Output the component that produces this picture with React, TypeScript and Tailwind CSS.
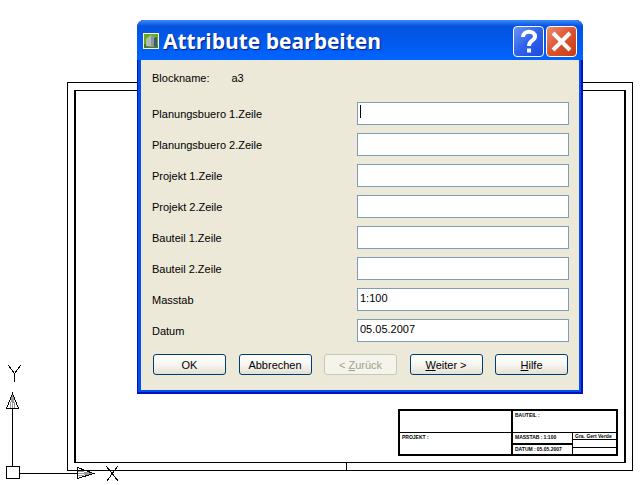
import React from "react";

const fields = [
  { label: "Planungsbuero 1.Zeile", value: "" },
  { label: "Planungsbuero 2.Zeile", value: "" },
  { label: "Projekt 1.Zeile", value: "" },
  { label: "Projekt 2.Zeile", value: "" },
  { label: "Bauteil 1.Zeile", value: "" },
  { label: "Bauteil 2.Zeile", value: "" },
  { label: "Masstab", value: "1:100" },
  { label: "Datum", value: "05.05.2007" },
];

function TitleBlock() {
  return (
    <div className="grid h-[47px] w-[220px] grid-cols-[113px_1fr] border-2 border-black font-['Liberation_Sans_Narrow','Liberation_Sans',sans-serif] text-[5px] leading-[6px] font-bold whitespace-nowrap text-black">
      <div className="grid grid-rows-[22px_1fr] border-r-2 border-black">
        <div className="border-b border-black" />
        <div className="px-[2px] py-px">PROJEKT :</div>
      </div>
      <div className="grid grid-rows-[22px_1fr]">
        <div className="border-b border-black px-[2px] py-px">BAUTEIL :</div>
        <div className="grid grid-cols-[60px_1fr]">
          <div className="grid grid-rows-[12px_1fr] border-r border-black">
            <div className="flex gap-px border-b-2 border-black px-[2px] py-px">
              <span>MASSTAB :</span>
              <span>1:100</span>
            </div>
            <div className="flex gap-px px-[2px] py-px">
              <span>DATUM :</span>
              <span className="font-['Liberation_Sans',sans-serif]">05.05.2007</span>
            </div>
          </div>
          <div className="grid grid-rows-[7px_8px_1fr]">
            <div className="border-b border-black px-[2px] font-['Liberation_Sans',sans-serif]">Gra. Gert Verde</div>
            <div className="border-b border-black" />
            <div />
          </div>
        </div>
      </div>
    </div>
  );
}

function AxesIcon() {
  return (
    <svg className="absolute bottom-0 left-0 h-[125px] w-[125px]" viewBox="0 360 125 125" fill="none" stroke="#000" shapeRendering="crispEdges" aria-hidden="true">
      <rect x="6.5" y="466.5" width="13" height="12" />
      <path d="M12.500 466V408M20 473.500H77" />
      <path d="M12.500 394L10 408M12.500 394L15 408M12.500 394V408M78 471L93 473.500M78 476L93 473.500M78 473.500H93" stroke="#999" />
      <path d="M12.500 393.500L6.500 408.500H18.500ZM77.500 467.500V478.500L93.500 473.500Z" />
      <path d="M8.500 365.500L14.500 373.500L20.500 365.500M14.500 373.500V381.500M106.500 466.500L118.500 481.500M117.500 466.500L106.500 481.500" />
    </svg>
  );
}

function AppIcon() {
  return (
    <svg className="size-4 shrink-0" viewBox="0 0 16 16" aria-hidden="true">
      <rect width="16" height="16" fill="#f8f8e4" />
      <rect x="1" y="1" width="14" height="14" fill="#68ac14" />
      <path d="M1 11L15 12V15H1Z" fill="#4c7c1c" />
      <path d="M3 6L8 2L11 4V14L3 13Z" fill="#b4baba" />
      <path d="M8 2L11 4V14H8Z" fill="#8c9698" />
      <path d="M11 5L14 4V13L11 14Z" fill="#3e5878" />
    </svg>
  );
}

const btn =
  "h-[21px] w-[73px] rounded-[3px] border border-[#003c74] bg-linear-to-b from-white via-[#f6f5f0] to-[#e4e1d6] pt-px text-[11px] leading-[18px] text-black disabled:border-[#c9c7ba] disabled:bg-none disabled:bg-[#f5f4ea] disabled:text-[#a1a192]";

function Dialog() {
  return (
    <section
      aria-label="Attribute bearbeiten"
      className="absolute top-[20px] left-[137px] w-[446px] rounded-t-[7px] bg-[#0010b4] font-['Liberation_Sans',Arial,sans-serif] text-[11px] text-black"
    >
      <header className="flex h-10 items-center rounded-t-[7px] bg-linear-to-b from-[#3c8cff] from-0% via-[#0452de] via-15% to-[#0064ff] px-[6px] pt-[2px]">
        <AppIcon />
        <h1 className="ml-1 flex-1 font-['Trebuchet_MS','Open_Sans',sans-serif] text-[21px] leading-7 font-bold whitespace-nowrap text-white [text-shadow:1px_1px_1px_#0a1883]">
          Attribute bearbeiten
        </h1>
        <div className="flex gap-[2px]">
          <button type="button" aria-label="Hilfe" className="size-[31px] rounded-[4px] border border-white bg-linear-to-br from-[#6c92f6] via-[#2f62ec] to-[#1a4be0]">
            <svg viewBox="0 0 29 29" fill="none" stroke="#fff" strokeWidth="4">
              <path d="M9 10C9 3 21 3 21 9.500C21 14 15 13 15 19" />
              <path d="M13 23.500H17" />
            </svg>
          </button>
          <button type="button" aria-label="Schließen" className="size-[31px] rounded-[4px] border border-white bg-linear-to-br from-[#ec8a6c] via-[#dd5230] to-[#c83c10]">
            <svg viewBox="0 0 29 29" fill="none" stroke="#fff" strokeWidth="4">
              <path d="M6 6L23 23M23 6L6 23" />
            </svg>
          </button>
        </div>
      </header>
      <div className="pr-[2px] pb-[2px] pl-px">
        <div className="bg-[#0050f0] pr-[2px] pb-[2px] pl-[3px]">
          <form className="bg-[#ece9d8] pt-[11px] pr-[10px] pb-[15px] pl-[11px]" onSubmit={(e) => e.preventDefault()}>
            <dl className="flex h-[14px] gap-[22px] leading-[14px]">
              <dt>Blockname:</dt>
              <dd>a3</dd>
            </dl>
            <div className="mt-[17px] flex flex-col gap-2">
              {fields.map((f, i) => (
                <div key={f.label} className="flex h-[23px] items-center justify-between">
                  <label htmlFor={`field-${i}`} className="pt-px">{f.label}</label>
                  <div className="relative">
                    <input
                      id={`field-${i}`}
                      defaultValue={f.value}
                      className="block h-[23px] w-[212px] border border-[#7f9db9] bg-white px-[2px] pb-[3px] outline-none"
                    />
                    {i === 0 && <span className="absolute top-[3px] left-[3px] h-[13px] w-px bg-black" />}
                  </div>
                </div>
              ))}
            </div>
            <div className="mt-3 flex justify-between px-px">
              <button type="submit" className={btn}>OK</button>
              <button type="button" className={btn}>Abbrechen</button>
              <button type="button" disabled className={btn}>&lt; <u>Z</u>urück</button>
              <button type="button" className={btn}><u>W</u>eiter &gt;</button>
              <button type="button" className={btn}><u>H</u>ilfe</button>
            </div>
          </form>
        </div>
      </div>
    </section>
  );
}

export default function App() {
  return (
    <main className="relative flex min-h-screen bg-white pt-[82px] pr-[9px] pb-[14px] pl-[67px]">
      <div className="relative flex flex-1 border border-black px-[6px] py-[7px]">
        <div className="flex flex-1 items-end justify-end border-x-2 border-y border-black p-[6px]">
          <TitleBlock />
        </div>
        <span className="absolute bottom-0 left-[278px] h-[7px] w-px bg-black" />
      </div>
      <AxesIcon />
      <Dialog />
    </main>
  );
}
